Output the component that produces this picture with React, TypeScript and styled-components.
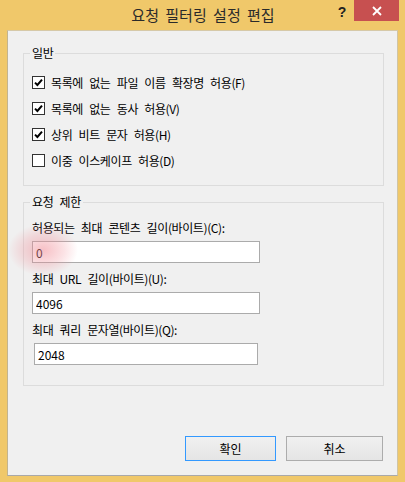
import React from 'react';
import styled, { createGlobalStyle } from 'styled-components';

const GlobalStyle = createGlobalStyle`
  html, body {
    margin: 0;
    padding: 0;
    background: #ffffff;
  }
  body {
    font-family: "Noto Sans CJK KR", "Noto Sans", sans-serif;
  }
`;

const checks = [
  { label: '목록에 없는 파일 이름 확장명 허용(F)', checked: true },
  { label: '목록에 없는 동사 허용(V)', checked: true },
  { label: '상위 비트 문자 허용(H)', checked: true },
  { label: '이중 이스케이프 허용(D)', checked: false },
];

const fields = [
  { label: '허용되는 최대 콘텐츠 길이(바이트)(C):', value: '0', inset: false },
  { label: '최대 URL 길이(바이트)(U):', value: '4096', inset: false },
  { label: '최대 쿼리 문자열(바이트)(Q):', value: '2048', inset: true },
];

const CheckMark = () => (
  <svg width="9" height="9" viewBox="0 0 9 9">
    <path d="M1 4.6 L3.4 7 L8 1.6" fill="none" stroke="#000" strokeWidth="2" />
  </svg>
);

const App: React.FC = () => {
  return (
    <>
      <GlobalStyle />
      <Window>
        <TitleBar>
          <span />
          <Title>요청 필터링 설정 편집</Title>
          <Controls>
            <HelpButton>?</HelpButton>
            <CloseButton>
              <svg width="10" height="10" viewBox="0 0 10 10">
                <path d="M1 1 L9 9 M9 1 L1 9" stroke="#fff" strokeWidth="1.8" />
              </svg>
            </CloseButton>
          </Controls>
        </TitleBar>
        <Client>
          <Group>
            <Legend>일반</Legend>
            {checks.map((c) => (
              <CheckRow key={c.label}>
                <Box>{c.checked && <CheckMark />}</Box>
                <span>{c.label}</span>
              </CheckRow>
            ))}
          </Group>
          <Group $second>
            <Legend>요청 제한</Legend>
            <Fields>
              {fields.map((f) => (
                <Field key={f.label}>
                  <FieldLabel>{f.label}</FieldLabel>
                  <TextBox $inset={f.inset} defaultValue={f.value} />
                </Field>
              ))}
            </Fields>
          </Group>
          <ButtonRow>
            <DialogButton $primary $width={91}>확인</DialogButton>
            <DialogButton $width={97}>취소</DialogButton>
          </ButtonRow>
        </Client>
        <Glow />
      </Window>
    </>
  );
};

const Window = styled.div`
  position: relative;
  width: 405px;
  height: 482px;
  box-sizing: border-box;
  background: #f0c86a;
  padding: 0 7px 6px 7px;
  display: flex;
  flex-direction: column;
  overflow: hidden;
`;

const TitleBar = styled.div`
  height: 30px;
  display: grid;
  grid-template-columns: 1fr auto 1fr;
  align-items: start;
  margin: 0 -1px 0 0;
`;

const Title = styled.div`
  font-size: 15px;
  line-height: 30px;
  color: #2a2a2a;
  letter-spacing: 0;
  word-spacing: 3px;
`;

const Controls = styled.div`
  display: flex;
  justify-content: flex-end;
  align-items: flex-start;
`;

const HelpButton = styled.div`
  width: 24px;
  height: 21px;
  text-align: center;
  font-family: "Liberation Sans", sans-serif;
  font-weight: bold;
  font-size: 14px;
  line-height: 24px;
  color: #222;
`;

const CloseButton = styled.div`
  width: 45px;
  height: 21px;
  background: #c75050;
  display: flex;
  align-items: center;
  justify-content: center;
`;

const Client = styled.div`
  flex: 1;
  background: #f0f0f0;
  border: 1px solid #b9b9b9;
  border-color: #d6c9a8 #d0c4a4 #a9a9a9 #c2b48f;
  padding: 14px 13px 14px 15px;
  display: flex;
  flex-direction: column;
  font-size: 12px;
  color: #000;
  letter-spacing: -0.4px;
  word-spacing: 4px;
`;

const Group = styled.fieldset<{ $second?: boolean }>`
  margin: ${(p) => (p.$second ? '8px 0 0 0' : '0')};
  padding: ${(p) => (p.$second ? '10px 8px 20px 8px' : '8px 8px 12px 8px')};
  border: 1px solid #dcdcdc;
  min-width: 0;
`;

const Legend = styled.legend`
  padding: 0 2px;
  margin-left: -2px;
  font-size: 12px;
  line-height: 16px;
  color: #000;
`;

const CheckRow = styled.div`
  height: 26px;
  display: flex;
  align-items: center;
  gap: 6px;
  font-size: 12px;
`;

const Box = styled.span`
  width: 13px;
  height: 13px;
  box-sizing: border-box;
  border: 1px solid #333;
  background: #fff;
  display: flex;
  align-items: center;
  justify-content: center;
`;

const Fields = styled.div`
  display: flex;
  flex-direction: column;
  gap: 8px;
`;

const Field = styled.div`
  display: flex;
  flex-direction: column;
  gap: 5px;
`;

const FieldLabel = styled.div`
  font-size: 12px;
  line-height: 16px;
`;

const TextBox = styled.input<{ $inset?: boolean }>`
  box-sizing: border-box;
  width: ${(p) => (p.$inset ? '224px' : '228px')};
  height: 22px;
  margin-left: ${(p) => (p.$inset ? '2px' : '0')};
  border: 1px solid #ababab;
  background: #fff;
  padding: 0 3px;
  font-family: "Noto Sans CJK KR", "Noto Sans", sans-serif;
  font-size: 12px;
  color: #000;
  outline: none;
`;

const ButtonRow = styled.div`
  margin-top: auto;
  display: flex;
  justify-content: flex-end;
  gap: 10px;
  padding-right: 1px;
`;

const DialogButton = styled.button<{ $primary?: boolean; $width: number }>`
  width: ${(p) => p.$width}px;
  height: 25px;
  box-sizing: border-box;
  border: 1px solid ${(p) => (p.$primary ? '#3399ff' : '#acacac')};
  background: linear-gradient(#f0f0f0, #e5e5e5);
  font-family: "Noto Sans CJK KR", "Noto Sans", sans-serif;
  font-size: 12px;
  color: #000;
  padding: 0;
`;

const Glow = styled.div`
  position: absolute;
  left: 8px;
  top: 224px;
  width: 70px;
  height: 52px;
  border-radius: 50%;
  background: radial-gradient(closest-side, rgba(240, 140, 150, 0.55), rgba(240, 140, 150, 0.25) 60%, rgba(240, 140, 150, 0));
  pointer-events: none;
`;

export default App;
